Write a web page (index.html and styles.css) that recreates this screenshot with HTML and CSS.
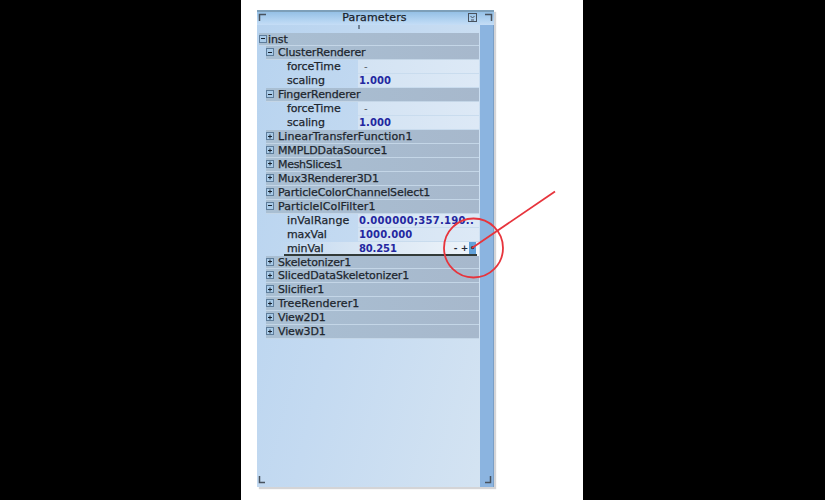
FILE: index.html
```
<!DOCTYPE html>
<html lang="en">
<head>
<meta charset="utf-8">
<title>Parameters</title>
<link rel="stylesheet" href="styles.css">
</head>
<body>
<main class="page">
<section class="panel">
<header class="head"><svg class="corner" viewBox="0 0 8 8"><path d="M1.500 8V1.500H8"/></svg><h1>Parameters</h1><svg class="menu" viewBox="0 0 9 9"><rect x=".5" y=".5" width="8" height="8"/><path d="M2.500 3l2 2 2-2M3 7h3"/></svg><svg class="corner" viewBox="0 0 8 8"><path d="M0 1.500H6.500V8"/></svg></header>
<div class="content">
<div class="list">
<div class="row group root"><i class="box"></i><span>inst</span></div>
<div class="row group"><i class="box"></i><span>ClusterRenderer</span></div>
<div class="row param"><span>forceTime</span><b class="dash">-</b></div>
<div class="row param"><span>scaling</span><b>1.000</b></div>
<div class="row group"><i class="box"></i><span>FingerRenderer</span></div>
<div class="row param"><span>forceTime</span><b class="dash">-</b></div>
<div class="row param"><span>scaling</span><b>1.000</b></div>
<div class="row group"><i class="box plus"></i><span class="wide">LinearTransferFunction1</span></div>
<div class="row group"><i class="box plus"></i><span>MMPLDDataSource1</span></div>
<div class="row group"><i class="box plus"></i><span class="tight">MeshSlices1</span></div>
<div class="row group"><i class="box plus"></i><span>Mux3Renderer3D1</span></div>
<div class="row group"><i class="box plus"></i><span>ParticleColorChannelSelect1</span></div>
<div class="row group"><i class="box"></i><span class="wide">ParticleIColFilter1</span></div>
<div class="row param"><span class="wide">inValRange</span><b class="range">0.000000;357.190..</b></div>
<div class="row param"><span>maxVal</span><b>1000.000</b></div>
<div class="row param active"><span>minVal</span><b>80.251</b><em>-</em><em>+</em><em class="knob">•</em></div>
<div class="row group"><i class="box plus"></i><span>Skeletonizer1</span></div>
<div class="row group"><i class="box plus"></i><span>SlicedDataSkeletonizer1</span></div>
<div class="row group"><i class="box plus"></i><span>Slicifier1</span></div>
<div class="row group"><i class="box plus"></i><span class="wide">TreeRenderer1</span></div>
<div class="row group"><i class="box plus"></i><span>View2D1</span></div>
<div class="row group"><i class="box plus"></i><span>View3D1</span></div>
</div>
<div class="strip"></div>
</div>
<svg class="foot left" viewBox="0 0 8 8"><path d="M1.500 0V6.500H7"/></svg>
<svg class="foot right" viewBox="0 0 8 8"><path d="M6.500 0V6.500H1"/></svg>
<i class="tick"></i>
</section>
<svg class="callout" viewBox="0 0 116 96"><circle cx="33.500" cy="63" r="29.500"/><path d="M32 63L115 6.500"/></svg>
</main>
</body>
</html>
```
FILE: styles.css
```
* { box-sizing: border-box; }
body { margin: 0; height: 500px; background: #000; overflow: hidden; font: 11px/13px "DejaVu Sans", sans-serif; }
.page { position: relative; width: 342px; height: 500px; margin-left: 241px; padding: 10px 0 0 16px; background: #fff; }
.panel { position: relative; display: flex; flex-direction: column; width: 237px; height: 477px; background: linear-gradient(105deg, #b7d3ef, #c4daf1 45%, #d5e4f2); box-shadow: 2px 2px 1px #d4d4d6; }
svg { fill: none; stroke: #48525e; stroke-width: 1.5; }
.head { display: flex; height: 15px; padding: 1px 1px 0 1px; background: linear-gradient(#95c0e6, #b2d3f1 60%, #c5ddf6); border-top: 2px solid #7d9fb9; }
.corner { width: 8px; height: 8px; }
.menu { width: 9px; height: 9px; margin-right: 8px; stroke-width: 1; }
h1 { flex: 1; margin: -2px 0 0 15px; text-align: center; font: 11px/13px "DejaVu Sans", sans-serif; color: #182028; letter-spacing: .15px; -webkit-text-stroke: .25px; }
.content { display: flex; flex: 1; }
.list { flex: 1; padding-top: 7.500px; }
.strip { width: 14px; margin-left: 1px; background: #8bb4e0; border-right: 1px solid #7b9fc6; }
.row { display: flex; height: 13.950px; color: #20262e; white-space: nowrap; letter-spacing: -.12px; border-bottom: 1px solid #c4d6e7; }
.row span { -webkit-text-stroke: .25px; }
.row .wide { letter-spacing: .1px; }
.row .tight { letter-spacing: -.3px; }
.group { margin-left: 9px; background: linear-gradient(90deg, #a9bfd3, #a7b8cc); }
.root { margin-left: 2px; }
.box { position: relative; width: 8px; height: 8px; margin: 2px 4px 0 0; background: #a9cbe9; border: 1px solid #5e7d9b; }
.root .box { margin-right: 1px; }
.box::before, .box.plus::after { content: ""; position: absolute; left: 1px; top: 2.500px; width: 4px; height: 1px; background: #17212d; }
.box.plus::after { transform: rotate(90deg); }
.param { padding-left: 30px; border: 0; }
.param span { width: 71px; }
.param b { flex: 1; padding-left: 1px; font: bold 10px/14px "DejaVu Sans", sans-serif; color: #2427a0; letter-spacing: .1px; background: linear-gradient(90deg, #d3e3f3, #dde9f6); border-bottom: 1px solid #c9dcee; }
.param .range { letter-spacing: .3px; }
.param .dash { padding-left: 6px; font-weight: normal; color: #58636c; }
.active { position: relative; background: linear-gradient(90deg, transparent 10%, #d7e5f3 45%, #eef4fa); }
.active::after { content: ""; position: absolute; left: 27px; right: 2px; bottom: 0; height: 1.500px; background: #323a38; }
.active b { background: none; border: 0; letter-spacing: -.15px; }
em { width: 9px; font: bold 9px/13px "DejaVu Sans", sans-serif; text-align: center; color: #202936; }
.active .knob { width: 7px; margin-right: 3px; background: #62a1d9; }
.foot { position: absolute; bottom: 3px; width: 8px; height: 8px; }
.left { left: 1px; }
.right { right: 2px; }
.tick { position: absolute; left: 101px; top: 15px; width: 2px; height: 4px; background: #718397; }
.callout { position: absolute; left: 199px; top: 185px; width: 116px; height: 96px; stroke: #e7343c; stroke-width: 1.800; }
```
